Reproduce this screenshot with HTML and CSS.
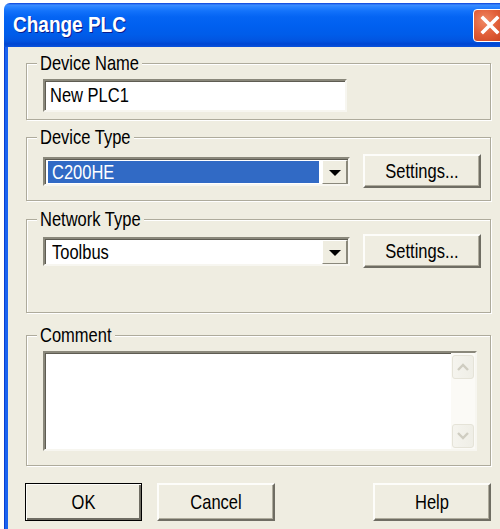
FILE: index.html
```html
<!DOCTYPE html>
<html lang="en">
<head>
<meta charset="utf-8">
<title>Change PLC</title>
<link rel="stylesheet" href="styles.css">
</head>
<body>
<div class="window">
  <div class="titlebar">
    <span class="title"><span class="tall">Change PLC</span></span>
    <button class="close" aria-label="Close">
      <svg viewBox="0 0 32 32" width="32" height="32"><path d="M9 9 L23 23 M23 9 L9 23" stroke="#fff" stroke-width="3.6" stroke-linecap="square" fill="none"/></svg>
    </button>
  </div>
  <div class="client">
    <div class="group g-name">
      <span class="caption tall">Device Name</span>
      <div class="edit"><span class="tall">New PLC1</span></div>
    </div>

    <div class="group g-type">
      <span class="caption tall">Device Type</span>
      <div class="row">
        <div class="combo">
          <div class="combo-value selected"><span class="tall">C200HE</span></div>
          <div class="drop"><span class="arrow"></span></div>
        </div>
        <button class="btn settings"><span class="tall">Settings...</span></button>
      </div>
    </div>

    <div class="group g-net">
      <span class="caption tall">Network Type</span>
      <div class="row">
        <div class="combo">
          <div class="combo-value"><span class="tall">Toolbus</span></div>
          <div class="drop"><span class="arrow"></span></div>
        </div>
        <button class="btn settings"><span class="tall">Settings...</span></button>
      </div>
    </div>

    <div class="group g-comment">
      <span class="caption tall">Comment</span>
      <div class="memo">
        <div class="memo-text"></div>
        <div class="vscroll">
          <div class="sbtn">
            <svg viewBox="0 0 14 10" width="14" height="10"><path d="M2 8 L7 3 L12 8" stroke="#cfcdc1" stroke-width="2.4" fill="none"/></svg>
          </div>
          <div class="track"></div>
          <div class="sbtn">
            <svg viewBox="0 0 14 10" width="14" height="10"><path d="M2 2 L7 7 L12 2" stroke="#cfcdc1" stroke-width="2.4" fill="none"/></svg>
          </div>
        </div>
      </div>
    </div>

    <div class="buttons">
      <button class="btn default"><span class="tall">OK</span></button>
      <button class="btn"><span class="tall">Cancel</span></button>
      <button class="btn help"><span class="tall">Help</span></button>
    </div>
  </div>
</div>
</body>
</html>
```
FILE: styles.css
```css
html, body {
  margin: 0;
  background: #ffffff;
  overflow: hidden;
}

body {
  font-family: "Liberation Sans", Arial, sans-serif;
  font-size: 16.5px;
  color: #000;
}

/* the dialog font is tall and narrow: stretch the glyphs vertically */
.tall {
  display: inline-block;
  transform: scaleY(1.22);
}

.window {
  margin: 3px 0 0 4px;
  width: 496px;
  height: 526px;
  display: flex;
  flex-direction: column;
}

/* Luna-style caption bar */
.titlebar {
  height: 44px;
  flex: none;
  display: flex;
  align-items: center;
  padding-left: 9px;
  overflow: hidden;
  border-radius: 6px 0 0 0;
  background: linear-gradient(to bottom,
    #0a3fd8 0px, #3c8dff 2px, #2a83ff 4px, #1272fb 8px, #0464f3 14px,
    #0060f0 22px, #005ce9 32px, #0254e0 38px, #0046d2 41px, #0a52dc 44px);
}

.title {
  color: #fff;
  font-weight: bold;
  font-size: 19px;
  text-shadow: 1px 1px 0 #0a1d8f;
  padding-bottom: 1px;
}

.title .tall {
  transform: scaleY(1.17);
}

.close {
  flex: none;
  margin-left: auto;
  margin-right: -6px;
  width: 33px;
  height: 33px;
  padding: 0;
  border: 1px solid #fff;
  border-radius: 4px;
  background: radial-gradient(circle at 35% 35%, #f08a66 0%, #e2603a 45%, #c8401e 100%);
  display: flex;
  align-items: center;
  justify-content: center;
}

.close svg { display: block; flex: none; }

/* dialog client area */
.client {
  flex: 1;
  background: #efede1;
  border-left: 4px solid #1a63ef;
  padding: 16px 0 0 18px;
  display: flex;
  flex-direction: column;
  position: relative;
}

.client::before {
  content: "";
  position: absolute;
  left: -4px;
  top: 0;
  bottom: 0;
  width: 1px;
  background: #0a3fd0;
}

.group {
  position: relative;
  box-sizing: border-box;
  width: 465px;
  border: 1px solid #aeab9c;
  box-shadow: inset 1px 1px 0 #fff, 1px 1px 0 #fff;
  padding-left: 16px;
}

.caption {
  position: absolute;
  top: -11px;
  left: 10px;
  padding: 0 3px;
  line-height: 20px;
  background: #efede1;
}

.g-name    { height: 57px; padding-top: 15px; }
.g-type    { height: 64px; padding-top: 16px; margin-top: 17px; }
.g-net     { height: 94px; padding-top: 14px; margin-top: 18px; }
.g-comment { height: 131px; padding-top: 15px; margin-top: 22px; }

/* sunken edit field */
.edit,
.combo,
.memo {
  box-sizing: border-box;
  background: #fff;
  border: 2px solid;
  border-color: #8a887b #f7f6f0 #f7f6f0 #8a887b;
  box-shadow: inset 1px 1px 0 #5e5c52;
}

.edit {
  width: 304px;
  height: 33px;
  line-height: 29px;
  padding-left: 5px;
}

.row {
  display: flex;
  align-items: center;
  gap: 13px;
}

.combo {
  width: 307px;
  height: 29px;
  display: flex;
  padding: 1px 0 0 1px;
}

.combo-value {
  flex: 1;
  line-height: 23px;
  padding-left: 4px;
  margin: 1px 3px 1px 2px;
}

.combo-value.selected {
  background: #316ac5;
  color: #fff;
}

.drop {
  width: 26px;
  flex: none;
  background: #efede1;
  border-left: 1px solid #fff;
  border-top: 1px solid #fff;
  border-right: 2px solid #8a887b;
  border-bottom: 1px solid #8a887b;
  box-sizing: border-box;
  display: flex;
  align-items: center;
  justify-content: center;
}

.arrow {
  width: 0;
  height: 0;
  border-left: 6px solid transparent;
  border-right: 6px solid transparent;
  border-top: 6px solid #000;
  margin-top: 2px;
}

/* raised push buttons */
.btn {
  font: inherit;
  color: #000;
  box-sizing: border-box;
  width: 118px;
  height: 34px;
  padding: 0;
  background: #efede1;
  border: 2px solid;
  border-color: #fdfdfa #6f6d63 #6f6d63 #fdfdfa;
  box-shadow: inset -1px -1px 0 #aeab9c;
}

.buttons {
  display: flex;
  margin: 17px 0 0 -1px;
  width: 466px;
}

.buttons .btn {
  height: 38px;
}

.buttons .btn + .btn {
  margin-left: 15px;
}

.btn.default {
  width: 117px;
  border: 1px solid #000;
  box-shadow: inset 1px 1px 0 #fdfdfa, inset -2px -2px 0 #6f6d63;
}

.buttons .btn.help {
  margin-left: auto;
}

/* multi-line comment box */
.memo {
  width: 434px;
  height: 100px;
  display: flex;
}

.memo-text { flex: 1; }

.vscroll {
  width: 24px;
  flex: none;
  display: flex;
  flex-direction: column;
  padding: 2px 0 1px;
  background: #fbfaf6;
}

.sbtn {
  box-sizing: border-box;
  height: 24px;
  margin: 0 1px;
  border: 1px solid #e5e3d8;
  border-radius: 3px;
  background: linear-gradient(to right, #f5f4ee, #efeee6);
  display: flex;
  align-items: center;
  justify-content: center;
}

.track { flex: 1; }
```
